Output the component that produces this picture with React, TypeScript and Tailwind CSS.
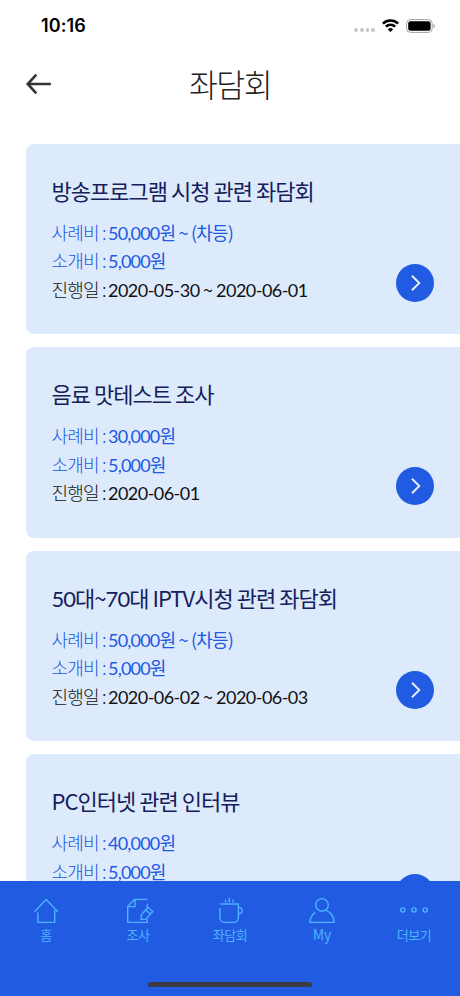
import React from 'react';

interface Survey {
  title: string;
  reward: string;
  referral: string;
  date: string;
}

const SURVEYS: Survey[] = [
  { title: '방송프로그램 시청 관련 좌담회', reward: '50,000원 ~ (차등)', referral: '5,000원', date: '2020-05-30 ~ 2020-06-01' },
  { title: '음료 맛테스트 조사', reward: '30,000원', referral: '5,000원', date: '2020-06-01' },
  { title: '50대~70대 IPTV시청 관련 좌담회', reward: '50,000원 ~ (차등)', referral: '5,000원', date: '2020-06-02 ~ 2020-06-03' },
  { title: 'PC인터넷 관련 인터뷰', reward: '40,000원', referral: '5,000원', date: '' },
];

// Numbers are set in Lato, the words around them in Noto Sans
const MixedText: React.FC<{ text: string }> = ({ text }) => (
  <>
    {text.split(/(\d[\d,-]*)/).map((part, idx) =>
      /^\d/.test(part) ? (
        <span key={idx} className="font-['Lato',sans-serif] leading-none">
          {part}
        </span>
      ) : (
        part
      )
    )}
  </>
);

const StatusBar: React.FC = () => (
  <div className="flex h-[51px] shrink-0 items-center justify-between pl-[41px] pr-[25px]">
    <span className="font-['Inter',sans-serif] text-[18px] font-semibold tracking-[0.1px] text-black">10:16</span>
    <div className="flex items-center">
      <div className="mr-[7px] mt-[9px] flex gap-[2px]">
        {[0, 1, 2, 3].map((dot) => (
          <span key={dot} className="size-[3.7px] rounded-full bg-[#c6c6c6]" />
        ))}
      </div>
      <svg className="mr-[7px]" width="17" height="13" viewBox="0 0 17 13" fill="none" stroke="#000" strokeWidth="2.5">
        <path d="M.9 4.7a10.8 10.8 0 0 1 15.2 0" />
        <path d="M3.8 7.7a6.7 6.7 0 0 1 9.4 0" />
        <path d="M8.5 12.9 5.9 10.4a3.7 3.7 0 0 1 5.2 0Z" fill="#000" stroke="none" />
      </svg>
      <svg width="29" height="14" viewBox="0 0 29 14">
        <rect x=".6" y=".6" width="25.6" height="12.8" rx="3.8" fill="none" stroke="#a3a3a3" />
        <rect x="2.2" y="2.2" width="22.4" height="9.6" rx="2.2" />
        <path d="M27.6 4.8v4.4c1.6-.8 1.6-3.6 0-4.4Z" fill="#999" />
      </svg>
    </div>
  </div>
);

const Header: React.FC = () => (
  <header className="grid h-[92px] shrink-0 grid-cols-[1fr_auto_1fr] items-start pl-[26px] pr-[26px] pt-[11px]">
    <svg className="mt-[11px]" width="26" height="22" viewBox="0 0 26 22" fill="none" stroke="#333" strokeWidth="2.6">
      <path d="M10.3 1.6 1.7 11l8.6 9.4M1.7 11h23.1" />
    </svg>
    <h1 className="-mt-[1px] text-[31.5px] font-light leading-[45px] tracking-[-0.05em] text-[#222]">좌담회</h1>
  </header>
);

const SurveyCard: React.FC<{ survey: Survey }> = ({ survey }) => (
  <article className="flex h-[190.5px] shrink-0 items-start justify-between rounded-l-lg bg-[#ddeafc] pl-[26px] pr-[26px]">
    <div className="whitespace-nowrap pt-[30px] tracking-[-0.05em]">
      <h2 className="-ml-[0.5px] mb-[12.2px] text-[22px] leading-[32px] tracking-[-0.97px] text-[#15205a]">
        <MixedText text={survey.title} />
      </h2>
      <dl className="-ml-[0.5px] grid grid-cols-[56.5px_auto] text-[18px] leading-[28.6px] text-[#2159e2]">
        <dt className="font-light">사례비 :</dt>
        <dd>
          <MixedText text={survey.reward} />
        </dd>
        <dt className="font-light">소개비 :</dt>
        <dd>
          <MixedText text={survey.referral} />
        </dd>
        {survey.date && (
          <>
            <dt className="font-light text-[#111]">진행일 :</dt>
            <dd className="tracking-[-0.53px] text-[#111]">
              <MixedText text={survey.date} />
            </dd>
          </>
        )}
      </dl>
    </div>
    <button className="mt-[120px] flex size-[38px] items-center justify-center rounded-full bg-[#215be2]">
      <svg className="ml-[2px]" width="10" height="16" viewBox="0 0 10 16" fill="none" stroke="#e8f1ff" strokeWidth="1.9">
        <path d="M1 .8 8.3 8 1 15.2" />
      </svg>
    </button>
  </article>
);

const NAV_ITEMS = [
  {
    label: '홈',
    icon: (
      <>
        <path d="M2.5 13.8 14.2 1.6l11.7 12.2" />
        <path d="M5.9 14.5v9.9h16.8V12" />
      </>
    ),
  },
  {
    label: '조사',
    icon: (
      <>
        <path d="M23.4 1.4H10.6L3.7 8.2v16.2h19.6v-3.2M23.3 5.8v3.4" />
        <path d="M11 1.4v7.2H4" />
        <path d="m17.3 16.9 6.6-7.6 4.9 4.2-6.8 7.6-4.9.4ZM21.8 12l4.6 4.1" />
      </>
    ),
  },
  {
    label: '좌담회',
    icon: (
      <>
        <path d="M4.2 6h18.2v13.9a4.5 4.5 0 0 1-4.5 4.5H8.5A4.5 4.5 0 0 1 4 19.9V10" />
        <path d="M22.4 9.4c5 0 5 6.4 0 6.4M9.6 1.4v3M13.3-.2v4.4M17 1.4v3" />
      </>
    ),
  },
  {
    label: 'My',
    icon: (
      <>
        <circle cx="14" cy="6.9" r="6.3" />
        <path d="M7.3 14.3A12.8 12.8 0 0 0 1.9 24.4h24.3c0-5.2-3.4-10.4-8.5-12.3" />
      </>
    ),
  },
  {
    label: '더보기',
    icon: (
      <>
        <circle cx="2.8" cy="12" r="2.1" />
        <circle cx="14" cy="12" r="2.1" />
        <circle cx="25.2" cy="12" r="2.1" />
      </>
    ),
  },
];

const BottomNav: React.FC = () => (
  <nav className="flex h-[115px] shrink-0 flex-col items-center justify-between bg-[#215be2] pb-[9px] pt-[17px]">
    <div className="grid w-full grid-cols-5 text-[#4bb3ff]">
      {NAV_ITEMS.map(({ label, icon }) => (
        <div key={label} className="flex flex-col items-center">
          <svg className="overflow-visible" width="28" height="26" viewBox="0 0 28 26" fill="none" stroke="currentColor" strokeWidth="1.4">
            {icon}
          </svg>
          <span className={label === 'My' ? 'text-[14px] leading-[20px]' : 'mt-[1px] text-[13px] leading-[20px] tracking-[-0.04em]'}>
            {label}
          </span>
        </div>
      ))}
    </div>
    <div className="h-[5.5px] w-[164px] rounded-full bg-[#3c3b41]" />
  </nav>
);

export default function App() {
  return (
    <div className="flex h-[996px] w-[460px] flex-col overflow-hidden bg-white font-['Noto_Sans_CJK_KR',sans-serif]">
      <StatusBar />
      <Header />
      <main className="flex min-h-0 flex-1 flex-col gap-[13px] overflow-hidden pl-[26px] pt-[0.5px]">
        {SURVEYS.map((survey) => (
          <SurveyCard key={survey.title} survey={survey} />
        ))}
      </main>
      <BottomNav />
    </div>
  );
}
